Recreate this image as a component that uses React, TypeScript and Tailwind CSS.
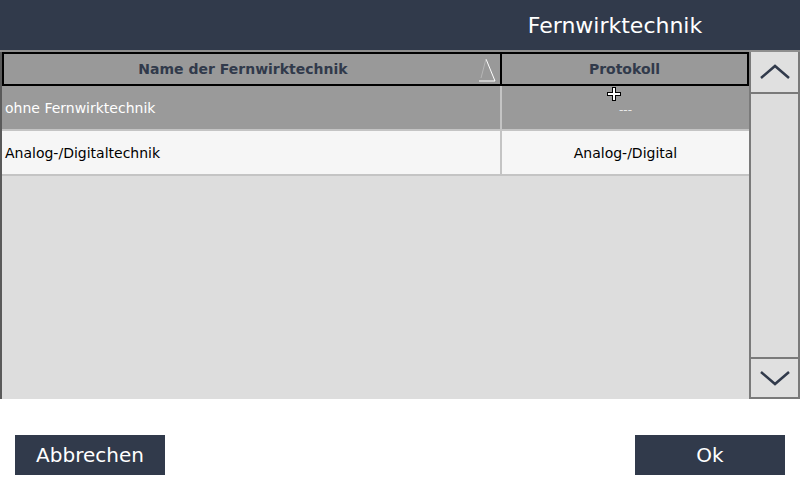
import * as React from "react"

const rows = [
  { name: "ohne Fernwirktechnik", proto: "---", selected: true },
  { name: "Analog-/Digitaltechnik", proto: "Analog-/Digital", selected: false },
]

export default function App() {
  return (
    <div
      className="w-[800px] h-[480px] flex flex-col bg-white overflow-hidden"
      style={{ fontFamily: '"DejaVu Sans", "Liberation Sans", sans-serif' }}
    >
      {/* Title bar */}
      <header className="h-[50px] shrink-0 bg-[#313a4b] flex items-center">
        <div className="w-[430px]" />
        <h1 className="flex-1 text-center text-white text-[22px] pt-[1px]">Fernwirktechnik</h1>
      </header>
      <div className="h-[2px] bg-[#8e8e8e]" />

      {/* Table + scrollbar */}
      <div className="h-[347px] flex bg-[#dddddd] border-l-2 border-[#5a5a5a]">
        <div className="w-[747px] flex flex-col">
          <div className="h-[34px] flex bg-[#999999] border-2 border-black">
            <div className="relative w-[498px] flex items-center justify-center pr-[18px] border-r-2 border-black">
              <span className="text-[14px] font-bold text-[#313a4b]">Name der Fernwirktechnik</span>
              <svg className="absolute right-[4px] top-[4px]" width="18" height="24" viewBox="0 0 18 24">
                <path d="M8 1 L17 23 L1 23" fill="none" stroke="#ffffff" strokeWidth="1" />
                <path d="M8 1 L3 20" fill="none" stroke="#b5b5b5" strokeWidth="1" />
              </svg>
            </div>
            <div className="flex-1 flex items-center justify-center">
              <span className="text-[14px] font-bold text-[#313a4b]">Protokoll</span>
            </div>
          </div>
          {rows.map((r) => (
            <div
              key={r.name}
              className={
                "h-[45px] flex border-b-2 border-[#c4c4c4] text-[14px] " +
                (r.selected ? "bg-[#9a9a9a] text-white" : "bg-[#f6f6f6] text-black")
              }
            >
              <div className="w-[500px] flex items-center pl-[3px] pt-[2px] border-r-2 border-[#c4c4c4]">{r.name}</div>
              <div className="relative flex-1 flex items-center justify-center pt-[2px]">
                <span className={r.selected ? "text-[12px] text-[#e8e8e8] pt-[2px]" : ""}>{r.proto}</span>
                {r.selected && (
                  <svg className="absolute left-[104px] top-[0px]" width="16" height="16" viewBox="0 0 16 16">
                    <path d="M8 1 V15 M1 8 H15" stroke="#000" strokeWidth="4" />
                    <path d="M8 2 V14 M2 8 H14" stroke="#fff" strokeWidth="2" />
                  </svg>
                )}
              </div>
            </div>
          ))}
        </div>

        {/* Scrollbar */}
        <div className="w-[51px] flex flex-col justify-between border-x-2 border-[#7a7a7a]">
          <button className="h-[42px] flex items-center justify-center border-b-2 border-[#7a7a7a] bg-[#e0e0e0]">
            <svg width="34" height="20" viewBox="0 0 34 20">
              <path d="M3 16 L17 4 L31 16" fill="none" stroke="#313a4b" strokeWidth="2.5" />
            </svg>
          </button>
          <button className="h-[42px] flex items-center justify-center border-t-2 border-b-2 border-[#7a7a7a] bg-[#e0e0e0]">
            <svg width="34" height="20" viewBox="0 0 34 20">
              <path d="M3 4 L17 16 L31 4" fill="none" stroke="#313a4b" strokeWidth="2.5" />
            </svg>
          </button>
        </div>
      </div>

      {/* Footer buttons */}
      <div className="flex-1 flex items-end justify-between px-[15px] pb-[5px]">
        <button className="w-[150px] h-[40px] bg-[#313a4b] text-white text-[20px]">Abbrechen</button>
        <button className="w-[150px] h-[40px] bg-[#313a4b] text-white text-[20px]">Ok</button>
      </div>
    </div>
  )
}
